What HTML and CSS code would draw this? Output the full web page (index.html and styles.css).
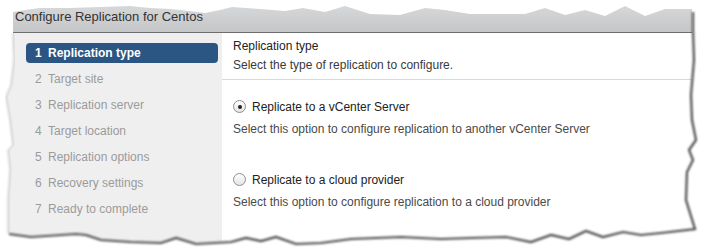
FILE: index.html
```html
<!DOCTYPE html>
<html lang="en">
  <head>
    <meta charset="UTF-8" />
    <title>Configure Replication for Centos</title>
    <link rel="stylesheet" href="styles.css">
  </head>
  <body>
    <div class="wizard">
      <div class="wizard-header">Configure Replication for Centos</div>

      <div class="wizard-body">
        <ul class="steps">
          <li class="step active"><span class="num">1</span>Replication type</li>
          <li class="step"><span class="num">2</span>Target site</li>
          <li class="step"><span class="num">3</span>Replication server</li>
          <li class="step"><span class="num">4</span>Target location</li>
          <li class="step"><span class="num">5</span>Replication options</li>
          <li class="step"><span class="num">6</span>Recovery settings</li>
          <li class="step"><span class="num">7</span>Ready to complete</li>
        </ul>

        <div class="page">
          <div class="page-head">
            <div class="page-title">Replication type</div>
            <div class="page-desc">Select the type of replication to configure.</div>
          </div>

          <div class="options">
            <div class="option">
              <div class="option-label"><span class="radio checked"></span>Replicate to a vCenter Server</div>
              <div class="option-desc">Select this option to configure replication to another vCenter Server</div>
            </div>
            <div class="option">
              <div class="option-label"><span class="radio"></span>Replicate to a cloud provider</div>
              <div class="option-desc">Select this option to configure replication to a cloud provider</div>
            </div>
          </div>
        </div>
      </div>

      <!-- torn paper edge drawn over the screenshot -->
      <svg class="torn" width="706" height="252" viewBox="0 0 706 252">
        <defs>
          <filter id="soft" x="-5%" y="-5%" width="110%" height="110%">
            <feGaussianBlur stdDeviation="1.1" />
          </filter>
        </defs>
        <path fill="#fff" fill-rule="evenodd"
          d="M0 0H706V252H0Z
             M13 12 L25 10 L40 8 L70 8 L100 7 L130 6 L150 8 L170 9 L190 11 L205 13 L220 10 L232 7 L260 9 L285 11 L303 8 L325 12 L345 6 L370 14 L400 15 L425 8 L445 10 L470 14 L525 14 L545 8 L565 15 L585 10 L605 16 L625 6 L645 16 L665 9 L692 9
             L692 30 L693 60 L690 95 L691 120 L695 140 L688 150 L692 160 L686 172 L685 200 L694 228
             L660 232 L640 234 L622 231 L602 236 L585 230 L568 238 L550 234 L530 241 L505 236 L470 237 L440 238 L400 236 L350 238 L320 242 L295 243 L275 236 L260 240 L245 237 L230 241 L195 243 L175 237 L160 242 L130 241 L100 239 L85 234 L75 233 L30 236 L8 233
             L8 200 L10 170 L8 150 L13 145 L10 120 L6 97 L11 85 L14 60 L13 33 Z" />
        <polyline class="shadow" filter="url(#soft)"
          points="693 12 693 30 694 60 691 95 692 120 696 140 689 150 693 160 687 172 686 200 695 229 661 233 641 235 623 232 603 237 586 231 569 239 551 235 531 242 506 237 471 238 441 239 401 237 351 239 321 243 296 244 276 237 261 241 246 238 231 242 196 244 176 238 161 243 131 242 101 240 86 235 76 234 31 237 9 234" />
        <polyline class="shadow-left" filter="url(#soft)"
          points="8 233 8 200 10 170 8 150 13 145 10 120 6 97 11 85 14 60 13 33" />
      </svg>
    </div>
  </body>
</html>
```

FILE: styles.css
```css
* {
  margin: 0;
  padding: 0;
  box-sizing: border-box;
}

body {
  background: #fff;
  font-family: "Liberation Sans", Arial, sans-serif;
  font-size: 12px;
  color: #333;
}

.wizard {
  position: relative;
  width: 706px;
  height: 252px;
  display: flex;
  flex-direction: column;
  overflow: hidden;
}

.wizard-header {
  height: 33px;
  padding: 2px 0 0 15px;
  line-height: 30px;
  font-size: 13px;
  color: #333;
  background: linear-gradient(#dadbdd, #c5c6c8);
  border-bottom: 1px solid #6d6d6d;
}

.wizard-body {
  flex: 1;
  display: flex;
}

.steps {
  list-style: none;
  width: 222px;
  background: #efefef;
  padding: 10px 4px 0 26px;
}

.step {
  height: 20px;
  line-height: 20px;
  margin-bottom: 6px;
  padding-left: 9px;
  color: #9b9b9b;
}

.step.active {
  background: #2b5582;
  border-radius: 4px;
  color: #fff;
  font-weight: bold;
}

.num {
  display: inline-block;
  width: 13px;
}

.page {
  flex: 1;
  background: #fff;
}

.page-head {
  padding: 4px 0 4px 11px;
  border-bottom: 1px solid #d9d9d9;
  line-height: 19px;
}

.page-title {
  color: #222;
}

.page-desc {
  color: #3a3a3a;
}

.options {
  padding: 17px 0 0 11px;
}

.option + .option {
  margin-top: 31px;
}

.option-label {
  display: flex;
  align-items: center;
  height: 19px;
  color: #222;
}

.option-desc {
  margin-top: 4px;
  line-height: 19px;
  color: #4a4a4a;
}

.radio {
  position: relative;
  width: 13px;
  height: 13px;
  margin-right: 6px;
  border: 1px solid #8e8e8e;
  border-radius: 50%;
  background: linear-gradient(#ffffff, #e4e4e4);
}

.radio.checked::after {
  content: "";
  position: absolute;
  left: 3.5px;
  top: 3.5px;
  width: 4px;
  height: 4px;
  border-radius: 50%;
  background: #222;
}

.torn {
  position: absolute;
  left: 0;
  top: 0;
  pointer-events: none;
}

.shadow {
  fill: none;
  stroke: #4a4a4a;
  stroke-width: 2.2;
}

.shadow-left {
  fill: none;
  stroke: #b5b5b5;
  stroke-width: 1;
}
```
